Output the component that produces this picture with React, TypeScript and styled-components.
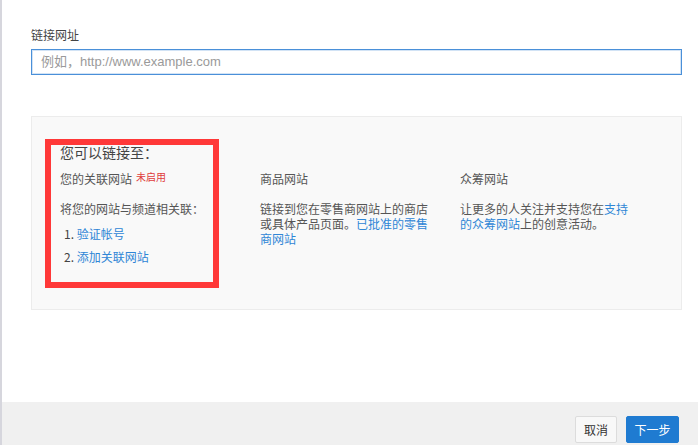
import styled, { createGlobalStyle } from "styled-components";

const GlobalStyle = createGlobalStyle`
  html, body {
    margin: 0;
    padding: 0;
    background: #fff;
  }
  body {
    font-family: "Noto Sans CJK SC", "Liberation Sans", sans-serif;
    color: #333;
  }
  * { box-sizing: border-box; }
`;

const Page = styled.div`
  height: 445px;
  display: flex;
  flex-direction: column;
  border-left: 2px solid #d6d6dd;
`;

const Content = styled.div`
  flex: 1;
  padding: 26px 16px 0 29px;
`;

const Label = styled.div`
  font-size: 12px;
  line-height: 18px;
  color: #444;
  margin-bottom: 3px;
`;

const UrlInput = styled.input`
  width: 100%;
  height: 26px;
  border: 1px solid #4a90d9;
  box-shadow: inset 0 0 0 1px rgba(74, 144, 217, 0.25);
  padding: 0 9px;
  font-family: "Liberation Sans", "Noto Sans CJK SC", sans-serif;
  font-size: 13px;
  color: #333;
  outline: none;
  &::placeholder {
    color: #9a9a9a;
  }
`;

const InfoBox = styled.div`
  position: relative;
  margin-top: 41px;
  background: #f9f9f9;
  border: 1px solid #ececec;
  padding: 25px 28px 44px;
`;

const Heading = styled.div`
  font-size: 14px;
  line-height: 20px;
  color: #444;
  margin-bottom: 9px;
`;

const Columns = styled.div`
  display: grid;
  grid-template-columns: 174px 174px 174px;
  column-gap: 26px;
`;

const Column = styled.div`
  font-size: 12px;
  line-height: 16px;
  color: #555;
`;

const ColTitle = styled.div`
  color: #555;
`;

const Badge = styled.sup`
  font-size: 10px;
  color: #e03c3c;
  margin-left: 4px;
  vertical-align: 3px;
  line-height: 0;
`;

const Desc = styled.div`
  margin-top: 14px;
  line-height: 15px;
`;

const Link = styled.a`
  color: #2f86d6;
  text-decoration: none;
`;

const Steps = styled.ol`
  list-style: none;
  margin: 10px 0 0;
  padding: 0 0 0 4px;
  display: flex;
  flex-direction: column;
  gap: 7px;
  color: #444;
`;

const Annotation = styled.div`
  position: absolute;
  left: 13px;
  top: 22px;
  width: 174px;
  height: 149px;
  border: 6px solid #ff3838;
  pointer-events: none;
`;

const Footer = styled.div`
  height: 43px;
  background: #f0f0f0;
  display: flex;
  justify-content: flex-end;
  align-items: flex-start;
  gap: 9px;
  padding: 14px 19px 0;
`;

const Button = styled.button<{ $primary?: boolean }>`
  height: 27px;
  width: ${(p) => (p.$primary ? "53px" : "42px")};
  padding: 0;
  font-family: "Noto Sans CJK SC", sans-serif;
  font-size: 12px;
  border-radius: 2px;
  border: 1px solid ${(p) => (p.$primary ? "#1f7bd1" : "#dcdcdc")};
  background: ${(p) => (p.$primary ? "#1f7bd1" : "#f8f8f8")};
  color: ${(p) => (p.$primary ? "#fff" : "#333")};
`;

export default function App() {
  return (
    <>
      <GlobalStyle />
      <Page>
        <Content>
          <Label>链接网址</Label>
          <UrlInput placeholder="例如，http://www.example.com" autoFocus />
          <InfoBox>
            <Heading>您可以链接至：</Heading>
            <Columns>
              <Column>
                <ColTitle>
                  您的关联网站<Badge>未启用</Badge>
                </ColTitle>
                <Desc>将您的网站与频道相关联：</Desc>
                <Steps>
                  <li>
                    1. <Link>验证帐号</Link>
                  </li>
                  <li>
                    2. <Link>添加关联网站</Link>
                  </li>
                </Steps>
              </Column>
              <Column>
                <ColTitle>商品网站</ColTitle>
                <Desc>
                  链接到您在零售商网站上的商店或具体产品页面。
                  <Link>已批准的零售商网站</Link>
                </Desc>
              </Column>
              <Column>
                <ColTitle>众筹网站</ColTitle>
                <Desc>
                  让更多的人关注并支持您在<Link>支持的众筹网站</Link>
                  上的创意活动。
                </Desc>
              </Column>
            </Columns>
            <Annotation />
          </InfoBox>
        </Content>
        <Footer>
          <Button>取消</Button>
          <Button $primary>下一步</Button>
        </Footer>
      </Page>
    </>
  );
}
